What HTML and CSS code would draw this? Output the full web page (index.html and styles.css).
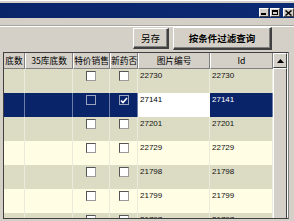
FILE: index.html
```html
<!DOCTYPE html>
<html>
<head>
<meta charset="utf-8">
<link rel="stylesheet" href="styles.css">
</head>
<body>
<div class="window">
  <div class="topframe"></div>
  <div class="titlebar">
    <div class="tbtns">
      <span class="tbtn min"><i></i></span>
      <span class="tbtn max"><i></i></span>
      <span class="tbtn close"><svg width="7" height="6" viewBox="0 0 7 6"><path d="M0.5 0.5 L6.5 5.5 M6.5 0.5 L0.5 5.5" stroke="#000" stroke-width="1.5"/></svg></span>
    </div>
  </div>
  <div class="menubar"></div>
  <div class="toolbar">
    <button class="btn save">另存</button>
    <button class="btn query">按条件过滤查询</button>
  </div>
  <div class="gridwrap">
    <div class="grid">
      <div class="head">
        <div class="hc">底数</div>
        <div class="hc">35库底数</div>
        <div class="hc">特价销售</div>
        <div class="hc">新药否</div>
        <div class="hc">图片编号</div>
        <div class="hc">Id</div>
      </div>
      <div class="row alt">
        <div class="c"></div><div class="c"></div>
        <div class="c cb"><span class="box"></span></div>
        <div class="c cb"><span class="box"></span></div>
        <div class="c t">22730</div><div class="c t">22730</div>
      </div>
      <div class="row sel">
        <div class="c"></div><div class="c"></div>
        <div class="c cb"><span class="box"></span></div>
        <div class="c cb"><span class="box on"><svg width="8" height="7" viewBox="0 0 8 7"><path d="M1 3.5 L3 5.5 L7 1" fill="none" stroke="#fff" stroke-width="1.6"/></svg></span></div>
        <div class="c t edit">27141</div><div class="c t">27141</div>
      </div>
      <div class="row alt">
        <div class="c"></div><div class="c"></div>
        <div class="c cb"><span class="box"></span></div>
        <div class="c cb"><span class="box"></span></div>
        <div class="c t">27201</div><div class="c t">27201</div>
      </div>
      <div class="row">
        <div class="c"></div><div class="c"></div>
        <div class="c cb"><span class="box"></span></div>
        <div class="c cb"><span class="box"></span></div>
        <div class="c t">22729</div><div class="c t">22729</div>
      </div>
      <div class="row alt">
        <div class="c"></div><div class="c"></div>
        <div class="c cb"><span class="box"></span></div>
        <div class="c cb"><span class="box"></span></div>
        <div class="c t">21798</div><div class="c t">21798</div>
      </div>
      <div class="row">
        <div class="c"></div><div class="c"></div>
        <div class="c cb"><span class="box"></span></div>
        <div class="c cb"><span class="box"></span></div>
        <div class="c t">21799</div><div class="c t">21799</div>
      </div>
      <div class="row alt">
        <div class="c"></div><div class="c"></div>
        <div class="c cb"><span class="box"></span></div>
        <div class="c cb"><span class="box"></span></div>
        <div class="c t">21797</div><div class="c t">21797</div>
      </div>
    </div>
    <div class="vscroll">
      <div class="arrow"><svg width="7" height="4" viewBox="0 0 7 4"><path d="M0 4 L3.5 0 L7 4 Z" fill="#000"/></svg></div>
      <div class="thumb"></div>
    </div>
  </div>
</div>
</body>
</html>
```

FILE: styles.css
```css
html, body {
  margin: 0;
  padding: 0;
}
body {
  width: 294px;
  height: 221px;
  overflow: hidden;
  background: #d4d0c8;
  font-family: "Liberation Sans", "Noto Sans CJK SC", sans-serif;
}
.window {
  width: 294px;
  height: 221px;
  display: flex;
  flex-direction: column;
  overflow: hidden;
}
.topframe {
  height: 3px;
  flex: none;
  background: #d4d0c8;
  border-top: 1px solid #fff;
  box-sizing: border-box;
}
.titlebar {
  height: 15px;
  flex: none;
  background: linear-gradient(to right, #0a246a, #0c2a72);
  display: flex;
  justify-content: flex-end;
  align-items: flex-start;
}
.tbtns {
  display: flex;
  gap: 1px;
  padding-top: 5px;
}
.tbtn {
  width: 10px;
  height: 9px;
  background: #d4d0c8;
  border-top: 1px solid #fff;
  border-left: 1px solid #fff;
  border-right: 1px solid #404040;
  border-bottom: 1px solid #404040;
  box-sizing: border-box;
  position: relative;
  display: flex;
  align-items: center;
  justify-content: center;
}
.tbtn.close {
  width: 11px;
  margin-left: 2px;
}
.tbtn.min i {
  position: absolute;
  left: 1px;
  bottom: 1px;
  width: 5px;
  height: 2px;
  background: #000;
}
.tbtn.max i {
  width: 6px;
  height: 5px;
  border: 1px solid #000;
  border-top-width: 2px;
  box-sizing: border-box;
}
.menubar {
  height: 9px;
  flex: none;
  box-sizing: border-box;
  border-bottom: 1px solid #fff;
  position: relative;
}
.menubar::after {
  content: "";
  position: absolute;
  left: 0;
  right: 0;
  bottom: 0;
  height: 1px;
  background: #a8a59e;
}
.toolbar {
  height: 25px;
  flex: none;
  display: flex;
  align-items: flex-start;
  padding-left: 133px;
  box-sizing: border-box;
  gap: 4px;
}
.btn {
  margin: 0;
  padding: 0;
  font-family: "Noto Sans CJK SC", sans-serif;
  background: #d4d0c8;
  color: #000;
  border-top: 1px solid #fff;
  border-left: 1px solid #fff;
  border-right: 2px solid #404040;
  border-bottom: 2px solid #404040;
  box-shadow: inset -1px -1px 0 #808080;
  box-sizing: border-box;
  display: flex;
  align-items: center;
  justify-content: center;
}
.btn.save {
  width: 36px;
  height: 21px;
  margin-top: 1px;
  font-size: 9.5px;
}
.btn.query {
  width: 99px;
  height: 23px;
  font-size: 9.5px;
  font-weight: bold;
}
.gridwrap {
  flex: none;
  height: 167px;
  margin-left: 3px;
  width: 286px;
  box-sizing: border-box;
  border-top: 1px solid #404040;
  border-left: 1px solid #404040;
  border-bottom: 1px solid #404040;
  border-right: 1px solid #808080;
  display: flex;
  overflow: hidden;
  background: #fff;
}
.grid {
  width: 269px;
  flex: none;
  overflow: hidden;
}
.head, .row {
  display: grid;
  grid-template-columns: 21px 48px 37px 28px 72px 63px;
}
.head {
  height: 16px;
  background: #d4d0c8;
}
.hc {
  box-sizing: border-box;
  border-left: 1px solid #fff;
  border-right: 1px solid #808080;
  border-bottom: 1px solid #808080;
  font-family: "Noto Sans CJK SC", sans-serif;
  font-size: 8.7px;
  line-height: 15px;
  text-align: center;
  white-space: nowrap;
  overflow: hidden;
  color: #000;
}
.hc:first-child {
  border-left: none;
}
.row {
  height: 24px;
  background: #fffde3;
}
.row.alt {
  background: #dcdcc4;
}
.c {
  box-sizing: border-box;
  border-right: 1px solid #ebebdb;
  height: 24px;
}
.c.t {
  font-size: 8px;
  line-height: 9px;
  padding: 2px 0 0 2px;
  color: #111;
}
.c.cb {
  display: flex;
  justify-content: center;
  padding-top: 2px;
}
.box {
  width: 10px;
  height: 10px;
  box-sizing: border-box;
  background: #fff;
  border: 1px solid #555;
  border-right-color: #9a9a9a;
  border-bottom-color: #9a9a9a;
  display: flex;
  align-items: center;
  justify-content: center;
}
.row.sel {
  background: #0a246a;
}
.row.sel .c {
  border-right-color: #6c7ca8;
}
.row.sel .c.t {
  color: #fff;
}
.row.sel .c.edit {
  background: #fff;
  color: #000;
  border-right-color: #fff;
}
.row.sel .box {
  background: #0a246a;
  border-color: #9aa4c0;
}
.vscroll {
  width: 14px;
  flex: none;
  background: #ece9e0;
  display: flex;
  flex-direction: column;
}
.arrow {
  height: 15px;
  flex: none;
  box-sizing: border-box;
  background: #d4d0c8;
  border-top: 1px solid #fff;
  border-left: 1px solid #fff;
  border-right: 1px solid #404040;
  border-bottom: 1px solid #404040;
  display: flex;
  align-items: center;
  justify-content: center;
}
.thumb {
  flex: 1;
  background: #d4d0c8;
  border-top: 1px solid #fff;
  border-left: 1px solid #fff;
  border-right: 1px solid #404040;
  box-sizing: border-box;
}
```
